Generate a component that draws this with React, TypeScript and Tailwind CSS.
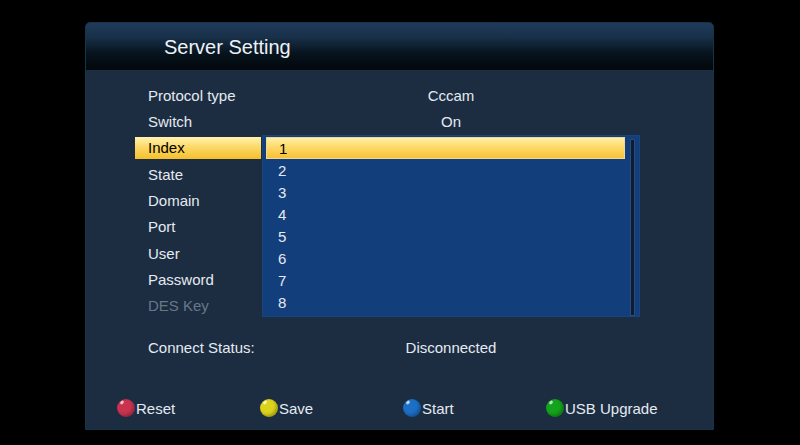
import React from "react";

const labels = [
  "Protocol type",
  "Switch",
  "Index",
  "State",
  "Domain",
  "Port",
  "User",
  "Password",
  "DES Key",
];

const values: Record<string, string> = {
  "Protocol type": "Cccam",
  Switch: "On",
};

const indexOptions = ["1", "2", "3", "4", "5", "6", "7", "8"];

const keys = [
  { label: "Reset", color: "bg-[#c93350]" },
  { label: "Save", color: "bg-[#dcd41c]" },
  { label: "Start", color: "bg-[#1c6fc6]" },
  { label: "USB Upgrade", color: "bg-[#14a31c]" },
];

function ColorKey({ label, color }: { label: string; color: string }) {
  return (
    <div className="flex items-center w-[143px]">
      <span className={`relative w-[18px] h-[18px] rounded-full ${color} shadow-[inset_-2px_-2px_3px_rgba(0,0,0,0.25)]`}>
        <span className="absolute left-[3px] top-[2px] w-[4px] h-[3px] rounded-full bg-white/70 rotate-[-40deg]" />
      </span>
      <span className="ml-[1px] pt-[2px] text-[15px] text-[#e4eaf0]">{label}</span>
    </div>
  );
}

export default function App() {
  return (
    <div
      className="w-[800px] h-[445px] bg-black pt-[22px] pl-[85px]"
      style={{ fontFamily: '"Liberation Sans", Arial, sans-serif' }}
    >
      <div className="w-[629px] h-[408px] flex flex-col rounded-t-[5px] overflow-hidden border border-[#163448] bg-[#1c2d42]">
        {/* title bar */}
        <div className="h-[47px] shrink-0 flex items-center pl-[78px] bg-[linear-gradient(to_bottom,#1f3b5a_0%,#183049_30%,#07131d_65%,#02070b_100%)]">
          <span className="text-[20px] text-[#eef2f6]">Server Setting</span>
        </div>

        {/* settings */}
        <div className="flex-1 flex flex-col pl-[49px] pt-[12px]">
          <div className="relative flex flex-col">
            {labels.map((l) => {
              const active = l === "Index";
              const muted = l === "DES Key";
              return (
                <div key={l} className="flex h-[26.3px] items-center">
                  <div
                    className={`w-[126px] h-[22px] flex items-center pl-[13px] pt-[2px] text-[15px] ${
                      active
                        ? "bg-[linear-gradient(to_bottom,#fff3b0_0%,#fcd968_45%,#f5bf2c_100%)] text-black"
                        : muted
                        ? "text-[#687787]"
                        : "text-[#e4eaf0]"
                    }`}
                  >
                    {l}
                  </div>
                  <div className="w-[378px] ml-[1px] pt-[2px] text-center text-[15px] text-[#e4eaf0]">
                    {values[l] ?? ""}
                  </div>
                </div>
              );
            })}

            {/* index picker */}
            <div className="absolute left-[127px] top-[53px] w-[378px] h-[182px] bg-[#123e7c] border border-[#17457f] pl-[3px] pt-[1px] flex">
              <div className="flex-1 flex flex-col">
                {indexOptions.map((o, i) => (
                  <div
                    key={o}
                    className={`h-[22px] w-[359px] flex items-center pl-[12px] pt-[3px] text-[15px] ${
                      i === 0
                        ? "bg-[linear-gradient(to_bottom,#fff0a6_0%,#fdd96a_45%,#f6c236_100%)] border border-[#f0d890] text-black"
                        : "text-[#e4eaf0]"
                    }`}
                  >
                    {o}
                  </div>
                ))}
              </div>
              <div className="w-[5px] h-[177px] mt-[2px] mr-[4px] bg-[#0c1c34] border border-[#2c4c74]" />
            </div>
          </div>

          <div className="flex h-[26px] items-center mt-[16px]">
            <div className="w-[126px] pl-[13px] pt-[2px] text-[15px] text-[#e4eaf0] whitespace-nowrap">
              Connect Status:
            </div>
            <div className="w-[378px] ml-[1px] pt-[2px] text-center text-[15px] text-[#e4eaf0]">
              Disconnected
            </div>
          </div>
        </div>

        {/* colour keys */}
        <div className="h-[44px] shrink-0 flex items-center pl-[31px] pt-[2px]">
          {keys.map((k) => (
            <ColorKey key={k.label} label={k.label} color={k.color} />
          ))}
        </div>
      </div>
    </div>
  );
}
